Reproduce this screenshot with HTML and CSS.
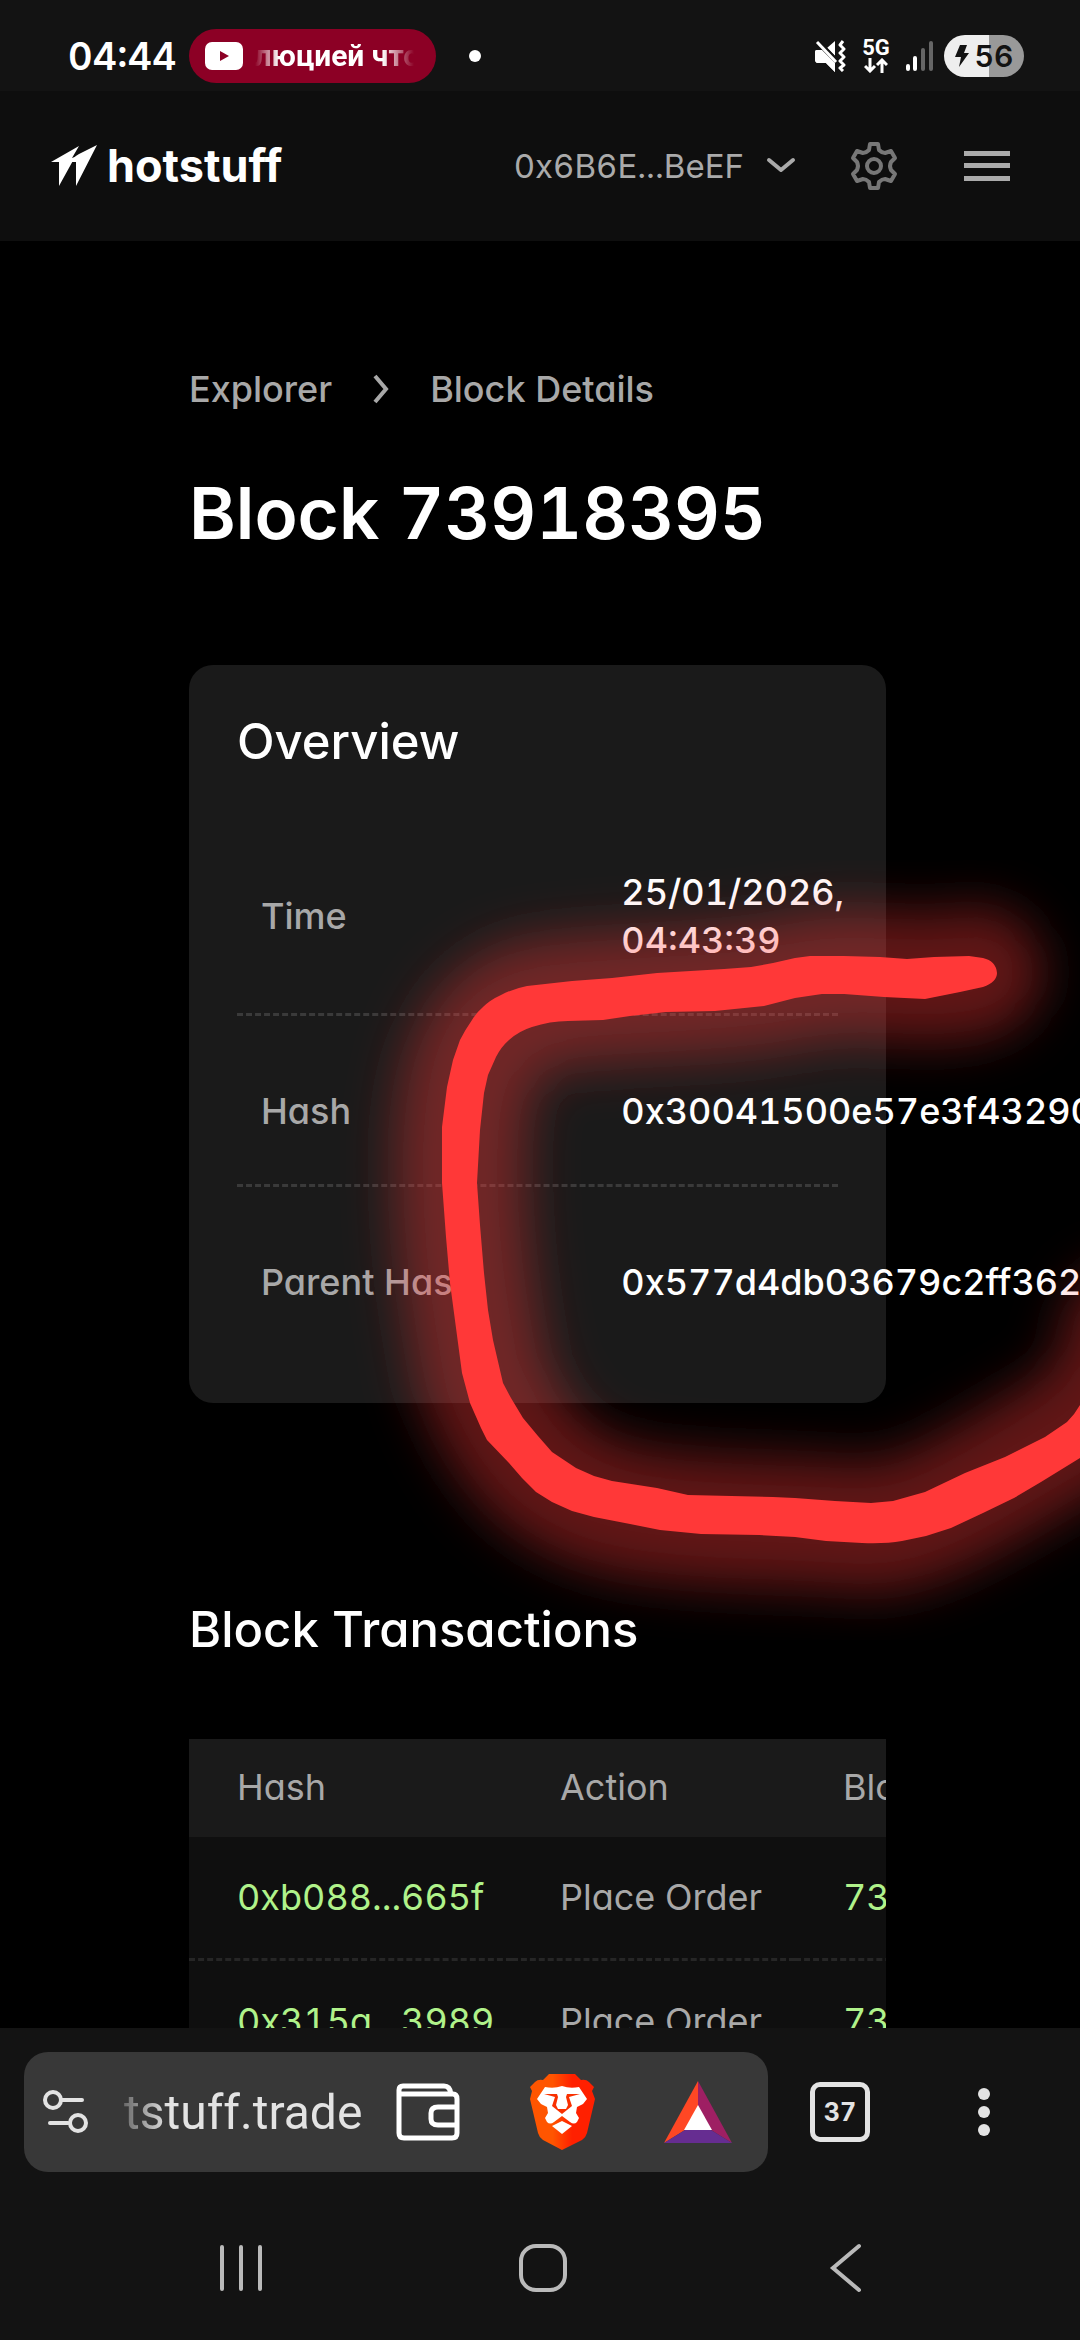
FILE: index.html
```html
<!DOCTYPE html>
<html lang="en">

<head>
  <meta charset="UTF-8">
  <meta name="viewport" content="width=device-width, initial-scale=1">
  <title>Block 73918395</title>
  <link rel="stylesheet" href="styles.css">
</head>

<body>

  <!-- Phone status bar -->
  <div class="status-bar">
    <span class="clock">04:44</span>
    <div class="now-playing">
      <svg width="38" height="28" viewBox="0 0 38 28">
        <rect width="38" height="28" rx="7" fill="#fff" />
        <path d="M15 9l9 5-9 5z" fill="#8c0025" />
      </svg>
      <span class="ticker">люцией что</span>
    </div>
    <span class="dot"></span>
    <div class="status-icons">
      <svg width="32" height="32" viewBox="0 0 32 32">
        <path d="M0 12q0-2 2-2h5l13 12v10l-9-9H3q-3 0-3-4zM12 8l8-7v15z" fill="#fff" />
        <path d="M2 2l19 20" stroke="#131313" stroke-width="7" />
        <path d="M2 2l19 20" stroke="#fff" stroke-width="3" />
        <path d="M0 12q0-2 2-2h5l13 13v9l-9-9H3q-3 0-3-4z" fill="#fff" />
        <path d="M28 1l-3 4 4 4-4 4 4 4-4 4 4 4-4 3 3 3" fill="none" stroke="#fff" stroke-width="3" stroke-linejoin="round" />
      </svg>
      <div class="network">
        <span>5G</span>
        <svg width="24" height="15" viewBox="0 0 24 15" fill="none" stroke="#fff" stroke-width="3">
          <path d="M6 0v13M1 8l5 5 5-5M18 15V2M13 7l5-5 5 5" />
        </svg>
      </div>
      <svg width="28" height="32" viewBox="0 0 28 32" stroke-width="4" stroke-linecap="round">
        <path d="M3 26v3M10 18v11" stroke="#fff" />
        <path d="M18 10v19M26 3v26" stroke="#666" />
      </svg>
      <div class="battery">
        <svg width="14" height="24" viewBox="0 0 14 24"><path d="M5 1h7l-3 8h5L4 23l2-10H0z" fill="#131313" /></svg>
        <span>56</span>
      </div>
    </div>
  </div>

  <!-- Site header -->
  <header class="header">
    <a class="logo" href="#">
      <svg width="46" height="42" viewBox="0 0 46 42" fill="#fff">
        <path d="M0 17L28 1 21 13 24 12 8 41 8 17z" />
        <path d="M20 17Q22 12 28 9L46 0 25 41 25 17z" />
      </svg>
      <span>hotstuff</span>
    </a>
    <button class="account">
      0x6B6E...BeEF
      <svg width="30" height="18" viewBox="0 0 30 18"><path d="M3 3l12 10L27 3" fill="none" stroke="#aaa" stroke-width="4" stroke-linecap="round" stroke-linejoin="round" /></svg>
    </button>
    <button class="icon-btn" aria-label="Settings">
      <svg width="50" height="50" viewBox="-25 -25 50 50" fill="none" stroke="#777" stroke-width="4" stroke-linejoin="round">
        <path d="M-5-16L-4-22H4L5-16Q8-13 11-13L17-15 21-8 17-4Q15 0 17 4L21 8 17 15 11 13Q8 13 5 16L4 22H-4L-5 16Q-8 13-11 13L-17 15-21 8-17 4Q-15 0-17-4L-21-8-17-15-11-13Q-8-13-5-16Z" />
        <circle r="7" />
      </svg>
    </button>
    <button class="icon-btn" aria-label="Menu">
      <svg width="46" height="30" viewBox="0 0 46 30" fill="#aaa">
        <rect width="46" height="5" />
        <rect y="12" width="46" height="5" />
        <rect y="25" width="46" height="5" />
      </svg>
    </button>
  </header>

  <main class="page">
    <nav class="breadcrumb">
      <a href="#">Explorer</a>
      <svg width="16" height="30" viewBox="0 0 16 30"><path d="M2 2l11 13L2 28" fill="none" stroke="#a8a8a8" stroke-width="4" /></svg>
      <span>Block Details</span>
    </nav>
    <h1>Block 73918395</h1>

    <section class="card">
      <h2>Overview</h2>
      <dl>
        <div class="row">
          <dt>Time</dt>
          <dd>25/01/2026, 04:43:39</dd>
        </div>
        <div class="row">
          <dt>Hash</dt>
          <dd>0x30041500e57e3f43290</dd>
        </div>
        <div class="row">
          <dt>Parent Hash</dt>
          <dd>0x577d4db03679c2ff362</dd>
        </div>
      </dl>
    </section>

    <section class="transactions">
      <h2>Block Transactions</h2>
      <div class="table-wrap">
        <table>
          <thead>
            <tr><th>Hash</th><th>Action</th><th>Block</th></tr>
          </thead>
          <tbody>
            <tr>
              <td><a href="#">0xb088...665f</a></td>
              <td>Place Order</td>
              <td><a href="#">73918395</a></td>
            </tr>
            <tr>
              <td><a href="#">0x315a...3989</a></td>
              <td>Place Order</td>
              <td><a href="#">73918395</a></td>
            </tr>
          </tbody>
        </table>
      </div>
    </section>
  </main>

  <!-- Browser toolbar -->
  <div class="toolbar">
    <div class="url-bar">
      <svg class="tune" width="48" height="46" viewBox="0 0 48 46" fill="none" stroke="#e3e3e3" stroke-width="4" stroke-linecap="round">
        <circle cx="11" cy="11" r="8" />
        <path d="M20 11h20M8 34h18" />
        <circle cx="36" cy="34" r="8" />
      </svg>
      <input class="url" type="text" value="tstuff.trade" aria-label="Address" readonly>
      <svg class="wallet" width="64" height="58" viewBox="0 0 64 58" fill="none" stroke="#fff" stroke-width="5" stroke-linejoin="round">
        <path d="M3 7q0-4 4-4h41q6 0 7 8h2q4 0 4 5v34q0 5-5 5H8q-5 0-5-5zM3 11h52" />
        <path d="M61 24H42q-7 0-7 6v6q0 6 7 6h19" />
      </svg>
      <svg class="brave" width="66" height="78" viewBox="0 0 66 78">
        <defs>
          <linearGradient id="lion" x1="0" x2="1">
            <stop offset="0.35" stop-color="#ff5500" />
            <stop offset="0.65" stop-color="#ff2000" />
          </linearGradient>
        </defs>
        <path d="M20 1h26l6 6q5-1 8 2l5 5-2 4 3 8-8 34q-1 4-5 7L33 77 14 67q-4-3-5-7L1 26l2-8-2-4 5-5q3-3 8-2z" fill="url(#lion)" />
        <path d="M16 14q9 2 17-1 8 3 17 1l8 12-4 5-6 3-1 6 3 5-2 4q-3 3-7 0l-8-6-8 6q-4 3-7 0l-2-4 3-5-1-6-6-3-4-5z" fill="#fff" />
        <path d="M23 53l10-5 10 5-10 8z" fill="#fff" />
        <path d="M15 21h13l1 3-2 8 2 4h8l2-4-2-8 1-3h13l-11 3 3 9-10 8-10-8 3-9z" fill="#f93000" />
      </svg>
      <svg width="68" height="62" viewBox="0 0 68 62">
        <path d="M34 0v26L21 49 0 62z" fill="#ff4724" />
        <path d="M34 0l34 62-21-13-13-23z" fill="#9e1f63" />
        <path d="M21 49h26l21 13H0z" fill="#662d91" />
        <path d="M34 24l14 25H20z" fill="#fff" />
      </svg>
    </div>
    <button class="tabs">37</button>
    <button class="more" aria-label="More">
      <svg width="12" height="50" viewBox="0 0 12 50" fill="#e3e3e3">
        <circle cx="6" cy="7" r="6" />
        <circle cx="6" cy="25" r="6" />
        <circle cx="6" cy="43" r="6" />
      </svg>
    </button>
  </div>

  <!-- Android navigation -->
  <div class="nav-bar">
    <button aria-label="Recents">
      <svg width="50" height="50" viewBox="0 0 50 50" stroke="#bababa" stroke-width="4" stroke-linecap="round">
        <path d="M6 4v42M25 4v42M44 4v42" />
      </svg>
    </button>
    <button aria-label="Home">
      <svg width="50" height="50" viewBox="0 0 50 50" fill="none" stroke="#bababa" stroke-width="4">
        <rect x="3" y="3" width="44" height="44" rx="15" />
      </svg>
    </button>
    <button aria-label="Back">
      <svg width="50" height="50" viewBox="0 0 50 50" fill="none" stroke="#bababa" stroke-width="4" stroke-linecap="round">
        <path d="M40 3L14 25l26 22" />
      </svg>
    </button>
  </div>

  <!-- Red marker drawn over the page -->
  <svg class="marker" viewBox="0 0 1080 2340">
    <defs>
      <filter id="glow" x="-20%" y="-20%" width="140%" height="140%">
        <feGaussianBlur stdDeviation="25" />
      </filter>
    </defs>
    <path d="M978 972C930 985 880 970 820 976C720 1000 620 990 530 1006C475 1025 462 1080 460 1155C460 1240 468 1300 482 1375C510 1450 550 1500 640 1513C720 1525 800 1520 872 1528C930 1525 1000 1475 1070 1435C1110 1410 1125 1380 1130 1330" fill="none" stroke="#ff3838" stroke-opacity="0.38" stroke-width="130" stroke-linecap="round" stroke-linejoin="round" filter="url(#glow)" />
    <path d="M997 973Q996 961 983 958L969 956 934 957 907 959 880 957 844 956 810 956 795 958 773 963 751 967 724 969 657 973 612 978 572 981 527 986Q512 989 501 995 490 1000 483 1007 476 1013 472 1020 465 1030 460 1040L453 1060 447 1087 442 1127 442 1183 446 1237 450 1283 458 1343 462 1373 470 1403 481 1428 487 1440 509 1463 522 1478 536 1492 552 1502 572 1511 594 1517 630 1524 660 1530 701 1534 759 1535 795 1537 826 1541 862 1543Q885 1544 902 1541L926 1536 951 1528 983 1513 1014 1498 1041 1482 1080 1458V1405Q1075 1414 1067 1422L1045 1437 1005 1457 965 1473 925 1492 893 1501 871 1503 835 1501 795 1498 773 1497 688 1495 657 1488 612 1481 594 1476 576 1468 552 1452 538 1436 523 1418 511 1398 503 1383 493 1340 488 1310 484 1273 480 1225 477 1183 480 1130 484 1093 488 1075 496 1057Q501 1047 509 1040 519 1031 532 1027 550 1021 568 1021L603 1020 630 1016 666 1012 715 1011 764 1006 795 998 822 994 844 994 884 997 925 999 960 992 983 987Q997 982 997 973Z" fill="#ff3838" />
  </svg>

</body>

</html>
```
FILE: styles.css
```css
* {
  box-sizing: border-box;
}

body {
  margin: 0;
  height: 100vh;
  display: flex;
  flex-direction: column;
  position: relative;
  overflow: hidden;
  background: #000;
  color: #fff;
  font-family: Inter, "Noto Sans", sans-serif;
  font-size: 36px;
  font-feature-settings: "tnum", "cv11";
  line-height: 48px;
}

button {
  padding: 0;
  border: none;
  background: none;
  color: inherit;
  font: inherit;
  cursor: pointer;
}

a {
  color: inherit;
  text-decoration: none;
}

svg {
  display: block;
  flex: none;
}

h1,
h2,
dl,
dd {
  margin: 0;
}

/* Status bar */
.status-bar {
  flex: none;
  display: flex;
  align-items: center;
  height: 91px;
  padding: 20px 56px 0 68px;
  background: #131313;
}

.clock {
  font-size: 38px;
  font-weight: 600;
}

.now-playing {
  display: flex;
  align-items: center;
  gap: 12px;
  width: 247px;
  height: 54px;
  margin-left: 12px;
  padding: 0 22px 0 16px;
  border-radius: 27px;
  background: #8c0025;
}

.ticker {
  flex: 1;
  overflow: hidden;
  white-space: nowrap;
  font-family: Roboto, sans-serif;
  font-size: 30px;
  font-weight: 700;
  mask-image: linear-gradient(to right, transparent, #000 24px, #000 80%, transparent);
}

.dot {
  width: 12px;
  height: 12px;
  margin-left: 33px;
  border-radius: 50%;
  background: #fff;
}

.status-icons {
  display: flex;
  align-items: center;
  gap: 15px;
  margin-left: auto;
}

.network {
  display: flex;
  flex-direction: column;
  align-items: center;
  width: 28px;
  font-family: Roboto, sans-serif;
  font-size: 22px;
  font-weight: 700;
  line-height: 20px;
}

.battery {
  display: flex;
  align-items: center;
  justify-content: center;
  gap: 6px;
  width: 80px;
  height: 42px;
  margin-left: -4px;
  border-radius: 21px;
  background: linear-gradient(to right, #eee 56%, #999 56%);
  color: #131313;
  font-size: 30px;
  font-weight: 600;
}

/* Header */
.header {
  flex: none;
  display: flex;
  align-items: center;
  height: 150px;
  padding: 0 70px 0 51px;
  background: #0e0e0e;
}

.logo {
  display: flex;
  align-items: center;
  gap: 10px;
  margin-right: auto;
  font-size: 45px;
  font-weight: 700;
}

.account {
  display: flex;
  align-items: center;
  gap: 22px;
  color: #aaa;
  font-size: 33px;
}

.icon-btn {
  margin-left: 53px;
}

.icon-btn + .icon-btn {
  margin-left: 65px;
}

/* Page */
.page {
  flex: 1;
  min-height: 0;
  overflow: hidden;
  padding: 124px 18% 0 17.5%;
}

.breadcrumb {
  display: flex;
  align-items: center;
  gap: 41px;
  color: #a8a8a8;
  font-weight: 500;
}

h1 {
  margin-top: 52px;
  font-size: 71px;
  font-weight: 600;
  line-height: 96px;
  white-space: nowrap;
}

h2 {
  font-size: 49px;
  font-weight: 500;
  line-height: 72px;
}

.card {
  margin-top: 104px;
  padding: 41px 48px 48px;
  border-radius: 24px;
  background: #1a1a1a;
}

.card dl {
  margin-top: 42px;
}

.row {
  display: grid;
  grid-template-columns: 60% 40%;
  align-items: center;
  padding: 71px 0 49px;
  border-bottom: 3px dashed #3a3a3a;
  font-weight: 500;
}

.row:first-child {
  padding-top: 48px;
}

.row:last-child {
  border-bottom: none;
}

.row dt,
.row dd {
  padding: 0 24px;
}

.row dt {
  color: #a8a8a8;
}

/* Transactions */
.transactions {
  margin-top: 191px;
}

.table-wrap {
  margin-top: 73px;
  overflow: hidden;
}

table {
  width: 1100px;
  table-layout: fixed;
  border-collapse: collapse;
  color: #a8a8a8;
}

th,
td {
  padding: 36px 0 37px 48px;
  border-bottom: 3px dashed #262626;
  background: #0f0f0f;
  text-align: left;
  font-weight: 400;
}

th {
  width: 323px;
  padding: 24px 0 26px 48px;
  border-bottom: none;
  background: #1a1a1a;
}

th:nth-child(2) {
  width: 283px;
}

th:nth-child(3) {
  width: auto;
}

td a {
  color: #b0f28a;
}

/* Browser toolbar */
.toolbar {
  flex: none;
  display: flex;
  align-items: center;
  height: 168px;
  padding: 0 90px 0 24px;
  background: #131313;
}

.url-bar {
  flex: 1;
  min-width: 0;
  display: flex;
  align-items: center;
  height: 120px;
  padding: 0 36px 0 18px;
  border-radius: 24px;
  background: #383838;
}

.url {
  flex: 1;
  min-width: 0;
  margin: 0 30px 0 34px;
  padding: 0;
  border: none;
  outline: none;
  background: none;
  color: #e3e3e3;
  font-family: Roboto, sans-serif;
  font-size: 48px;
  mask-image: linear-gradient(to right, rgba(0, 0, 0, 0.3), #000 44px);
}

.brave {
  margin: 0 69px;
}

.tabs {
  width: 60px;
  height: 60px;
  margin-left: 42px;
  border: 5px solid #e3e3e3;
  border-radius: 10px;
  color: #e3e3e3;
  font-size: 25px;
  font-weight: 700;
}

.more {
  margin-left: 108px;
}

/* Android navigation */
.nav-bar {
  flex: none;
  display: flex;
  justify-content: space-between;
  height: 144px;
  padding: 0 211px 0 216px;
  background: #131313;
}

/* Marker lies over the whole screen */
.marker {
  position: absolute;
  top: 0;
  left: 0;
  width: 100%;
  pointer-events: none;
}
```
